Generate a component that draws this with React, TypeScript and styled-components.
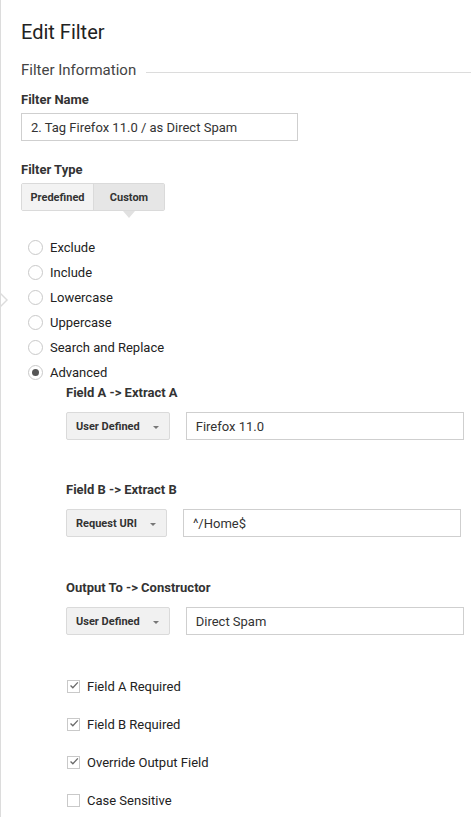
import React from "react";
import styled, { createGlobalStyle } from "styled-components";

const GlobalStyle = createGlobalStyle`
  html, body { margin: 0; padding: 0; background: #fff; }
  body { font-family: Roboto, "Noto Sans", "Liberation Sans", sans-serif; color: #333; }
  * { box-sizing: border-box; }
`;

const Page = styled.div`
  position: relative;
  min-height: 817px;
  border-left: 1px solid #dcdcdc;
  padding: 20px 0 0 20px;
  overflow: hidden;
`;

const Notch = styled.div`
  position: absolute;
  left: -1px;
  top: 292px;
  width: 0;
  height: 0;
  border-top: 8px solid transparent;
  border-bottom: 8px solid transparent;
  border-left: 8px solid #dcdcdc;
  &::after {
    content: "";
    position: absolute;
    left: -9px;
    top: -7px;
    border-top: 7px solid transparent;
    border-bottom: 7px solid transparent;
    border-left: 7px solid #fff;
  }
`;

const Title = styled.h1`
  margin: 0;
  font-size: 20px;
  line-height: 24px;
  font-weight: 400;
  color: #222;
`;

const SectionHeader = styled.div`
  margin-top: 16px;
  display: flex;
  align-items: center;
  gap: 10px;
  font-size: 15px;
  line-height: 20px;
  color: #444;
`;

const SectionLine = styled.div`
  flex: 1;
  height: 1px;
  margin-top: 5px;
  background: #dcdcdc;
`;

const Label = styled.div<{ $top: number }>`
  margin-top: ${(p) => p.$top}px;
  font-size: 13px;
  line-height: 16px;
  font-weight: 700;
  color: #333;
`;

const TextInput = styled.div<{ $top?: number; $width: number }>`
  margin-top: ${(p) => p.$top ?? 0}px;
  width: ${(p) => p.$width}px;
  height: 28px;
  border: 1px solid #cfcfcf;
  padding: 0 9px;
  display: flex;
  align-items: center;
  font-size: 13px;
  color: #333;
  background: #fff;
`;

const ButtonGroup = styled.div`
  margin-top: 5px;
  display: inline-flex;
  align-self: flex-start;
  height: 28px;
  border: 1px solid #dadada;
  border-radius: 2px;
`;

const Segment = styled.div<{ $active?: boolean; $width: number }>`
  position: relative;
  width: ${(p) => p.$width}px;
  display: flex;
  align-items: center;
  justify-content: center;
  font-size: 11px;
  font-weight: 700;
  color: #333;
  background: ${(p) => (p.$active ? "#e6e6e6" : "#f3f3f3")};
  & + & { border-left: 1px solid #dadada; }
  ${(p) =>
    p.$active &&
    `
    &::after {
      content: "";
      position: absolute;
      left: 50%;
      bottom: -8px;
      transform: translateX(-50%);
      border-left: 6px solid transparent;
      border-right: 6px solid transparent;
      border-top: 7px solid #e1e1e1;
    }
  `}
`;

const Column = styled.div`
  display: flex;
  flex-direction: column;
`;

const RadioList = styled.div`
  margin-top: 24px;
  display: flex;
  flex-direction: column;
`;

const RadioRow = styled.div`
  height: 25px;
  display: flex;
  align-items: center;
  gap: 7px;
  padding-left: 7px;
  font-size: 13px;
  color: #222;
`;

const RadioCircle = styled.span<{ $checked?: boolean }>`
  width: 15px;
  height: 15px;
  border-radius: 50%;
  border: 1px solid #c9c9c9;
  background: #fff;
  display: flex;
  align-items: center;
  justify-content: center;
  &::after {
    content: "";
    display: ${(p) => (p.$checked ? "block" : "none")};
    width: 7px;
    height: 7px;
    border-radius: 50%;
    background: #555;
  }
`;

const Advanced = styled.div`
  padding-left: 45px;
  display: flex;
  flex-direction: column;
`;

const PairRow = styled.div`
  margin-top: 11px;
  display: flex;
  align-items: center;
  gap: 16px;
`;

const Select = styled.div`
  height: 28px;
  display: inline-flex;
  align-items: center;
  gap: 13px;
  padding: 0 10px 0 9px;
  border: 1px solid #dadada;
  border-radius: 2px;
  background: #f1f1f1;
  font-size: 11px;
  font-weight: 700;
  color: #333;
`;

const Caret = styled.span`
  width: 0;
  height: 0;
  margin-top: 2px;
  border-left: 3px solid transparent;
  border-right: 3px solid transparent;
  border-top: 3px solid #777;
`;

const CheckList = styled.div`
  margin-top: 32px;
  display: flex;
  flex-direction: column;
`;

const CheckRow = styled.div`
  height: 38px;
  display: flex;
  align-items: center;
  gap: 7px;
  padding-left: 1px;
  font-size: 13px;
  color: #222;
`;

const CheckBox = styled.span`
  width: 13px;
  height: 13px;
  border: 1px solid #c9c9c9;
  background: #fff;
  display: flex;
  align-items: center;
  justify-content: center;
  overflow: visible;
`;

const Check = () => (
  <svg width="13" height="13" viewBox="0 0 13 13" style={{ marginTop: -2, marginLeft: 1 }}>
    <path d="M2 6.5 L5 9.5 L11.5 2.5" fill="none" stroke="#6a6a6a" strokeWidth="1.7" />
  </svg>
);

const radios = ["Exclude", "Include", "Lowercase", "Uppercase", "Search and Replace", "Advanced"];

const pairs = [
  { label: "Field A -> Extract A", select: "User Defined", value: "Firefox 11.0", top: 0 },
  { label: "Field B -> Extract B", select: "Request URI", value: "^/Home$", top: 42 },
  { label: "Output To -> Constructor", select: "User Defined", value: "Direct Spam", top: 43 },
];

const checks = [
  { label: "Field A Required", checked: true },
  { label: "Field B Required", checked: true },
  { label: "Override Output Field", checked: true },
  { label: "Case Sensitive", checked: false },
];

export default function App() {
  return (
    <>
      <GlobalStyle />
      <Page>
        <Notch />
        <Title>Edit Filter</Title>
        <SectionHeader>
          <span>Filter Information</span>
          <SectionLine />
        </SectionHeader>
        <Column>
          <Label $top={12}>Filter Name</Label>
          <TextInput $top={5} $width={277}>2. Tag Firefox 11.0 / as Direct Spam</TextInput>
          <Label $top={21}>Filter Type</Label>
          <ButtonGroup>
            <Segment $width={71}>Predefined</Segment>
            <Segment $width={71} $active>Custom</Segment>
          </ButtonGroup>
        </Column>
        <RadioList>
          {radios.map((r) => (
            <RadioRow key={r}>
              <RadioCircle $checked={r === "Advanced"} />
              <span>{r}</span>
            </RadioRow>
          ))}
        </RadioList>
        <Advanced>
          {pairs.map((p) => (
            <React.Fragment key={p.label}>
              <Label $top={p.top}>{p.label}</Label>
              <PairRow>
                <Select>
                  <span>{p.select}</span>
                  <Caret />
                </Select>
                <TextInput $width={278}>{p.value}</TextInput>
              </PairRow>
            </React.Fragment>
          ))}
          <CheckList>
            {checks.map((c) => (
              <CheckRow key={c.label}>
                <CheckBox>{c.checked && <Check />}</CheckBox>
                <span>{c.label}</span>
              </CheckRow>
            ))}
          </CheckList>
        </Advanced>
      </Page>
    </>
  );
}
